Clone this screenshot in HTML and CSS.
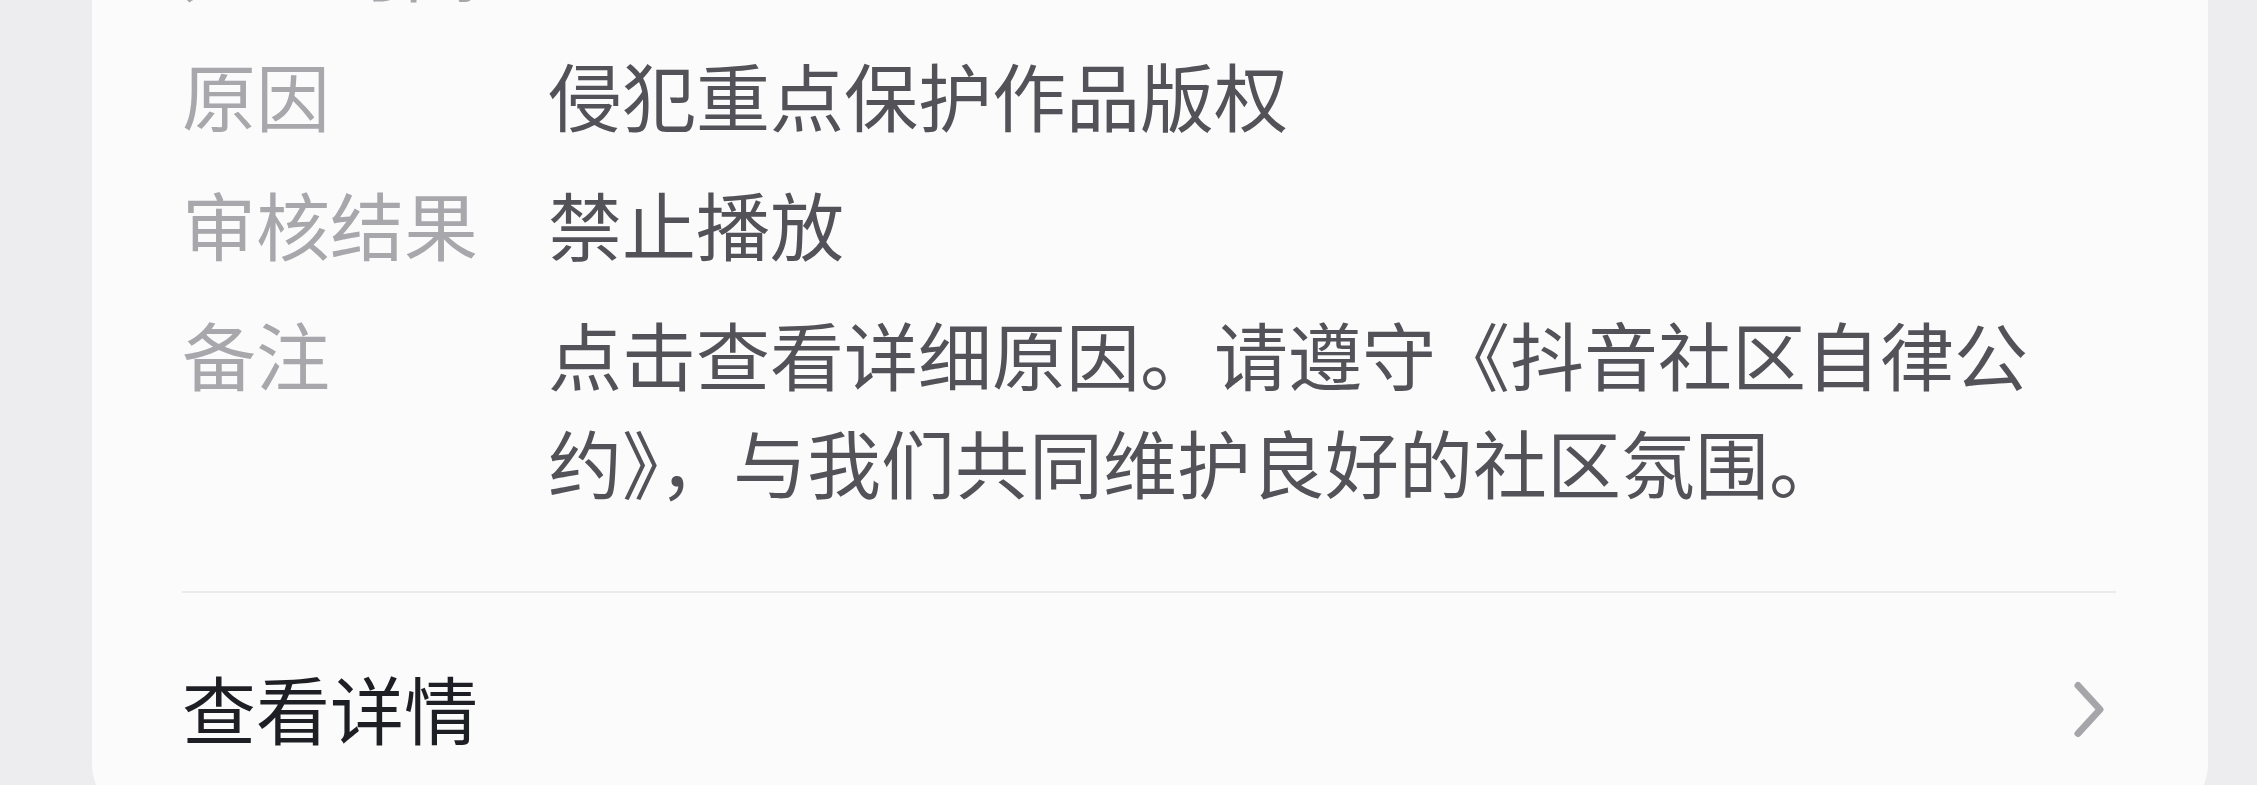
FILE: index.html
```html
<!DOCTYPE html>
<html lang="zh-CN">
<head>
  <meta charset="UTF-8">
  <meta name="viewport" content="width=device-width, initial-scale=1.0">
  <title>审核详情</title>
  <link rel="stylesheet" href="styles.css">
</head>
<body>
  <div class="card">
    <div class="info-list">
      <div class="info-row">
        <div class="label">处理时间</div>
        <div class="value">2023-06-18 21:05</div>
      </div>
      <div class="info-row">
        <div class="label">原因</div>
        <div class="value">侵犯重点保护作品版权</div>
      </div>
      <div class="info-row">
        <div class="label">审核结果</div>
        <div class="value">禁止播放</div>
      </div>
      <div class="info-row">
        <div class="label">备注</div>
        <div class="value">点击查看详细原因。请遵守《抖音社区自律公约》，与我们共同维护良好的社区氛围。</div>
      </div>
    </div>

    <div class="divider"></div>

    <a class="detail-link" href="#">
      <span>查看详情</span>
      <svg class="chevron" width="48" height="64" viewBox="0 0 48 64">
        <path d="M10 10.5 L32 34.5 L10 58.5" fill="none" stroke="#a6a6aa" stroke-width="7" stroke-linecap="round" stroke-linejoin="round"/>
      </svg>
    </a>
  </div>
</body>
</html>
```

FILE: styles.css
```css
body {
  margin: 0;
  background: #ededf0;
  font-family: "Noto Sans CJK SC", "Noto Sans", sans-serif;
  height: 100vh;
  overflow: hidden;
}
.card {
  margin: -130px 49px 0 92px;
  padding: 40px 92px 62px 90px;
  background: #fbfbfc;
  border-radius: 0 0 60px 60px;
}
.info-list {
  display: flex;
  flex-direction: column;
  gap: 21.5px;
}
.info-row {
  display: flex;
  font-size: 74px;
  line-height: 108px;
}
.label {
  flex: 0 0 366px;
  color: #a8a8ac;
}
.value {
  max-width: 1500px;
  color: #525258;
}
.divider {
  height: 2px;
  background: #ebebed;
  margin-top: 76px;
}
.detail-link {
  display: flex;
  justify-content: space-between;
  align-items: center;
  margin-top: 60px;
  font-size: 74px;
  line-height: 108px;
  color: #1e1e25;
  text-decoration: none;
}
.chevron {
  display: block;
}
```
